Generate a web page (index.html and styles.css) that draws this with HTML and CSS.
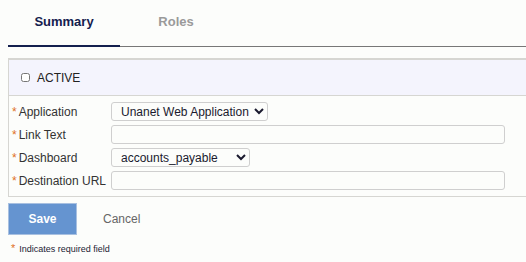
FILE: index.html
```html
<!DOCTYPE html>
<html lang="en">
<head>
  <meta charset="UTF-8">
  <meta name="viewport" content="width=device-width, initial-scale=1.0">
  <title>Dashboard Link</title>
  <link rel="stylesheet" href="styles.css">
</head>
<body>
  <div class="page">
    <div class="tabs">
      <a class="tab active" href="#">Summary</a>
      <a class="tab" href="#">Roles</a>
    </div>

    <div class="panel">
      <div class="panel-head">
        <label class="check">
          <input type="checkbox" id="active" name="active">
          <span>ACTIVE</span>
        </label>
      </div>

      <div class="panel-body">
        <div class="form-row">
          <label for="application"><span class="req">*</span>Application</label>
          <select id="application" class="sel-app">
            <option>Unanet Web Application</option>
          </select>
        </div>
        <div class="form-row">
          <label for="linkText"><span class="req">*</span>Link Text</label>
          <input type="text" id="linkText" class="wide">
        </div>
        <div class="form-row">
          <label for="dashboard"><span class="req">*</span>Dashboard</label>
          <select id="dashboard" class="sel-dash">
            <option>accounts_payable</option>
          </select>
        </div>
        <div class="form-row">
          <label for="destUrl"><span class="req">*</span>Destination URL</label>
          <input type="text" id="destUrl" class="wide">
        </div>
      </div>
    </div>

    <div class="actions">
      <button type="submit" class="save-btn">Save</button>
      <a class="cancel" href="#">Cancel</a>
    </div>

    <div class="note"><span class="req">*</span>Indicates required field</div>
  </div>
</body>
</html>
```

FILE: styles.css
```css
* {
  margin: 0;
  padding: 0;
  box-sizing: border-box;
  font-family: 'Liberation Sans', Arial, sans-serif;
}

body {
  background: #fcfdfb;
  color: #333;
  font-size: 12px;
}

.page {
  padding-left: 8px;
}

.tabs {
  display: flex;
  height: 47px;
  border-bottom: 1px solid #777;
}

.tab {
  width: 112px;
  text-align: center;
  padding-top: 14px;
  font-size: 13px;
  font-weight: 700;
  color: #9a9a9a;
  text-decoration: none;
}

.tab.active {
  color: #14204e;
  border-bottom: 2px solid #14204e;
  margin-bottom: -1px;
}

.panel {
  margin-top: 11px;
  border-top: 2px solid #d6d6d2;
  border-left: 1px solid #d6d6d2;
  border-bottom: 1px solid #d6d6d2;
}

.panel-head {
  background: #f4f4fd;
  height: 36px;
  border-bottom: 1px solid #d6d6d2;
  display: flex;
  align-items: center;
  padding-left: 12px;
}

.check {
  display: flex;
  align-items: center;
  gap: 7px;
  color: #222;
  font-size: 12px;
}

.check input {
  width: 9px;
  height: 9px;
  margin: 0;
}

.panel-body {
  padding: 4px 0 4px;
}

.form-row {
  display: flex;
  align-items: center;
  height: 23px;
}

.form-row label {
  width: 102px;
  padding-left: 3px;
  color: #333;
}

.req {
  color: #e0701e;
  margin-right: 2px;
}

.form-row input,
.form-row select {
  height: 19px;
  border: 1px solid #cfcfcf;
  border-radius: 3px;
  background: #fcfdfb;
  font-size: 12px;
  color: #1a1a2e;
}

.form-row select {
  padding-left: 5px;
}

.wide {
  width: 394px;
  padding: 0 4px;
}

.sel-app {
  width: 157px;
}

.sel-dash {
  width: 139px;
}

.actions {
  display: flex;
  align-items: center;
  margin-top: 6px;
}

.save-btn {
  width: 69px;
  height: 32px;
  background: #6594d0;
  border: 1px solid #a8c0e0;
  color: #fff;
  font-size: 12px;
  font-weight: 700;
  cursor: pointer;
}

.cancel {
  margin-left: 26px;
  color: #666;
  text-decoration: none;
}

.note {
  margin-top: 7px;
  padding-left: 3px;
  font-size: 9px;
  color: #223;
}

.note .req {
  font-size: 11px;
  margin-right: 4px;
}
```
